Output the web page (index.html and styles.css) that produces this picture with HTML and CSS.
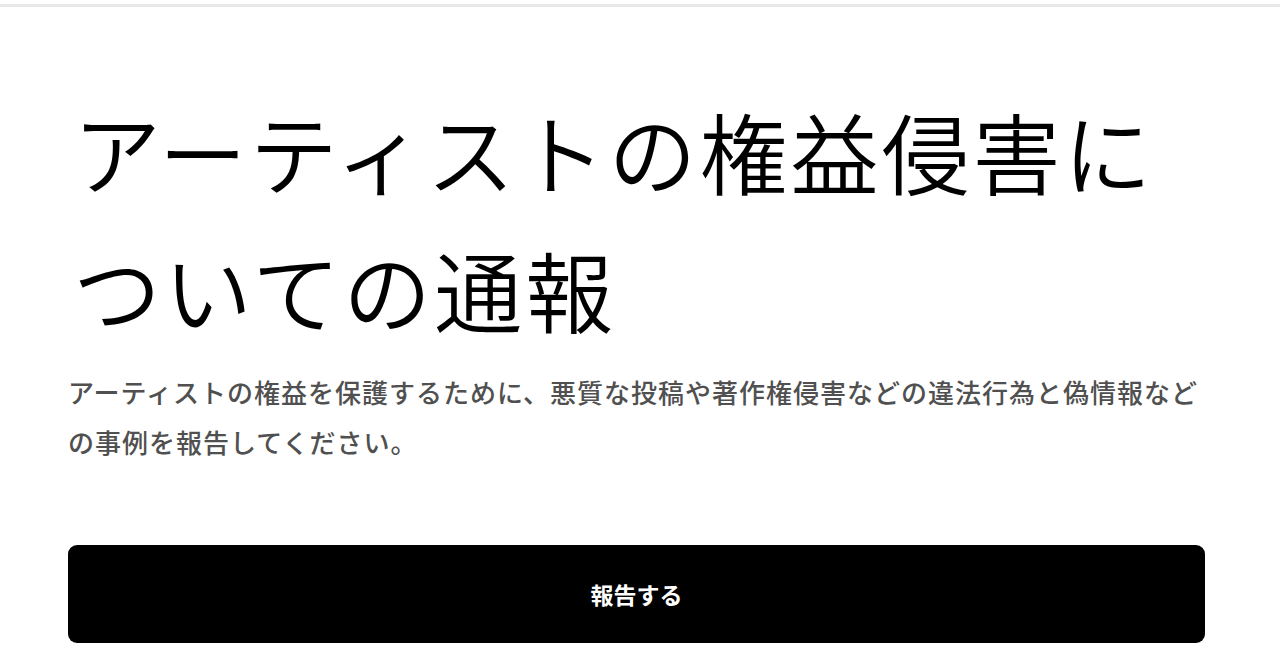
FILE: index.html
```html
<!DOCTYPE html>
<html lang="ja">
<head>
<meta charset="utf-8">
<link rel="stylesheet" href="styles.css">
</head>
<body>
<div class="topbar"></div>
<main class="content">
  <h1 class="title">アーティストの権益侵害についての通報</h1>
  <p class="desc">アーティストの権益を保護するために、悪質な投稿や著作権侵害などの違法行為と偽情報などの事例を報告してください。</p>
  <button class="report">報告する</button>
</main>
</body>
</html>
```
FILE: styles.css
```css
html, body {
  margin: 0;
  padding: 0;
  background: #ffffff;
}
body {
  font-family: "Noto Sans CJK JP", "Noto Sans", sans-serif;
  width: 1280px;
  height: 669px;
  overflow: hidden;
}
.topbar {
  height: 3px;
  margin-top: 4px;
  background: #e8e8e8;
}
.content {
  padding: 74px 75px 0 68px;
}
.title {
  margin: 0 0 0 5px;
  font-size: 88px;
  font-weight: 350;
  letter-spacing: 3px;
  line-height: 138px;
  color: #000;
}
.desc {
  margin: 10px 0 0 0;
  font-size: 26px;
  font-weight: 500;
  letter-spacing: 1px;
  line-height: 50px;
  color: #505050;
}
.report {
  display: block;
  width: 100%;
  height: 98px;
  margin-top: 78px;
  background: #000;
  color: #fff;
  border: none;
  border-radius: 9px;
  font-family: "Noto Sans CJK JP", sans-serif;
  font-size: 23px;
  font-weight: 700;
}
```
